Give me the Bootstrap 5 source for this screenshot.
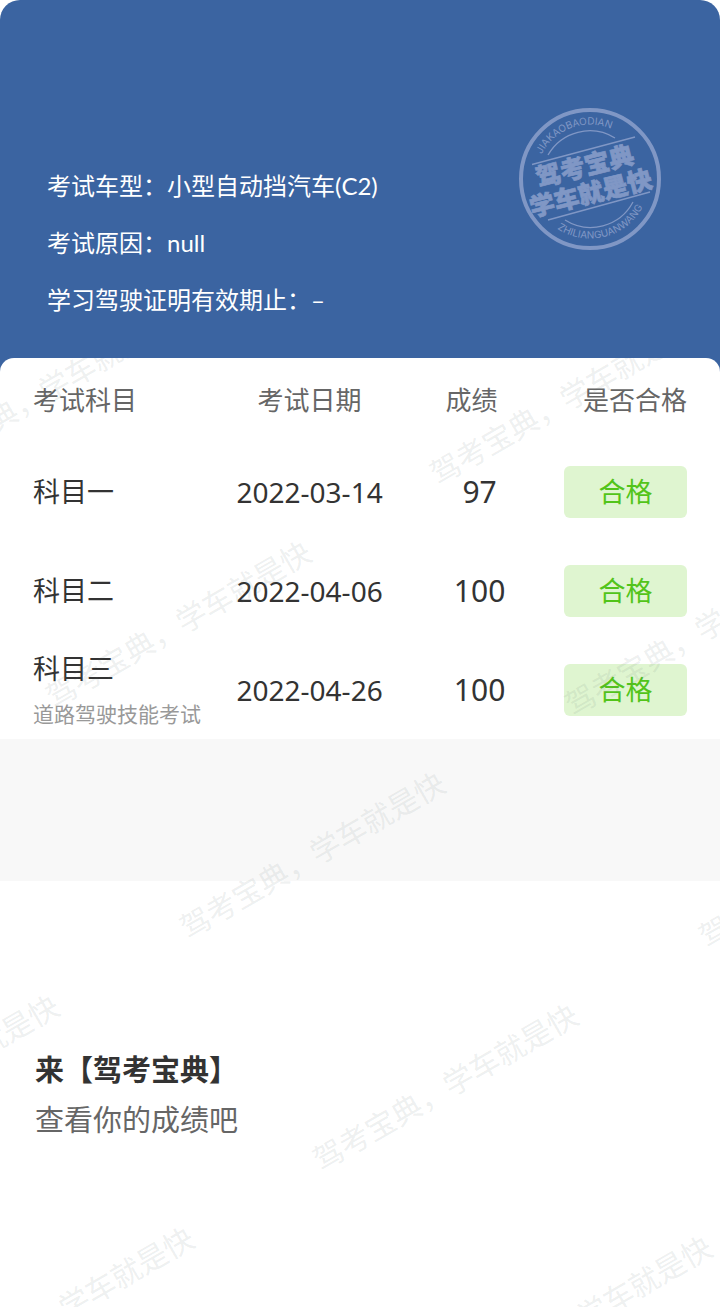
<!DOCTYPE html>
<html lang="zh-CN">
<head>
<meta charset="utf-8">
<meta name="viewport" content="width=device-width, initial-scale=1">
<title>考试成绩</title>
<link rel="stylesheet" href="https://cdn.jsdelivr.net/npm/bootstrap@5.3.0/dist/css/bootstrap.min.css">
<style>
  body { font-family: "Noto Sans", "Noto Sans CJK SC", sans-serif; color: #333; background: #fff; }
  .sheet { background: #3b64a1; border-radius: 20px 20px 0 0; }
  .hero { height: 358px; padding: 108px 59px 0 47px; color: #fff; }
  .facts { margin-top: 49px; font-family: Lato, "Noto Sans CJK SC", sans-serif; font-size: 24px; line-height: 57px; }
  .seal { width: 142px; height: 142px; fill: #8097c5; stroke: none; }
  .seal .ring { fill: none; stroke: #8097c5; }
  .seal-name { font-family: "Noto Sans CJK SC", sans-serif; font-size: 25px; font-weight: 900; stroke: #8097c5; stroke-width: .7; }
  .seal-arc { font-family: Inter, sans-serif; font-size: 10px; text-anchor: middle; }
  .result { background: #fff; border-radius: 14px 14px 0 0; min-height: calc(100vh - 358px); }
  .scores { table-layout: fixed; font-size: 27px; line-height: 36px; }
  .scores th { height: 84px; padding-top: 2px; font-size: 26px; font-weight: 400; color: #666; }
  .scores td { height: 99px; }
  .scores th, .scores td { padding: 0; vertical-align: middle; white-space: nowrap; }
  .scores th:first-child, .scores td:first-child { padding-left: 33px; }
  .scores th:last-child, .scores td:last-child { padding-right: 33px; }
  .c-subject { width: 31%; }
  .c-date { width: 24%; }
  .c-score { width: 21%; }
  .c-pass { width: 24%; }
  .day { font-size: 28px; }
  .scores td.points { font-size: 30px; padding-left: 16px; }
  .kind { font-size: 21px; line-height: 30px; margin-top: 12px; color: #999; }
  .passed { width: 123px; height: 52px; line-height: 52px; border-radius: 6px; background: #dff5d0; color: #52c41a; }
  .band { height: 142px; background: #f8f8f8; }
  .invite { padding: 164px 35px 0; font-size: 29px; line-height: 50px; }
  .invite p { color: #666; }
  .watermark { inset: 0; pointer-events: none; font-size: 30px; fill: #5a6e6e; fill-opacity: .11; }
</style>
</head>
<body>
<div class="sheet">
  <header class="hero d-flex justify-content-between align-items-start">
    <div class="facts">
      <div>考试车型：小型自动挡汽车(C2)</div>
      <div>考试原因：null</div>
      <div>学习驾驶证明有效期止：–</div>
    </div>
    <svg class="seal flex-shrink-0" viewBox="9 8 142 142" role="img" aria-label="驾考宝典 学车就是快">
      <defs>
        <path id="arcTop" d="M27 89 A54 54 0 0 1 127 52"/>
        <path id="arcBottom" d="M29 110 A60 60 0 0 0 140 82"/>
      </defs>
      <circle class="ring" cx="80" cy="79" r="69" stroke-width="4"/>
      <path class="ring" stroke-width="1.3" d="M38 55 A48 48 0 0 1 105 38 M55 120 A48 48 0 0 0 123 102 M22 64.500 L125 37 M38 120 L140 92"/>
      <text class="seal-arc"><textPath href="#arcTop" startOffset="50%">JIAKAOBAODIAN</textPath></text>
      <text class="seal-arc"><textPath href="#arcBottom" startOffset="50%">ZHILIANGUANWANG</textPath></text>
      <g class="seal-name" text-anchor="middle">
        <text transform="translate(77 75) rotate(-14)">驾考宝典</text>
        <text transform="translate(83 102) rotate(-14)">学车就是快</text>
      </g>
    </svg>
  </header>

  <main class="result position-relative overflow-hidden">
    <table class="scores w-100 text-center">
      <colgroup><col class="c-subject"><col class="c-date"><col class="c-score"><col class="c-pass"></colgroup>
      <thead>
        <tr><th class="text-start">考试科目</th><th>考试日期</th><th>成绩</th><th class="text-end">是否合格</th></tr>
      </thead>
      <tbody>
        <tr><td class="text-start">科目一</td><td class="day">2022-03-14</td><td class="points">97</td><td><div class="passed ms-auto">合格</div></td></tr>
        <tr><td class="text-start">科目二</td><td class="day">2022-04-06</td><td class="points">100</td><td><div class="passed ms-auto">合格</div></td></tr>
        <tr><td class="text-start">科目三<div class="kind">道路驾驶技能考试</div></td><td class="day">2022-04-26</td><td class="points">100</td><td><div class="passed ms-auto">合格</div></td></tr>
      </tbody>
    </table>
    <div class="band"></div>
    <section class="invite">
      <div class="fw-bold">来【驾考宝典】</div>
      <p class="mb-0">查看你的成绩吧</p>
    </section>

    <!-- slanted brand text repeated over the whole result -->
    <svg class="watermark position-absolute w-100 h-100" aria-hidden="true">
      <text transform="translate(-83 120) rotate(-30)">驾考宝典，学车就是快</text>
      <text transform="translate(438 128) rotate(-30)">驾考宝典，学车就是快</text>
      <text transform="translate(54 351) rotate(-30)">驾考宝典，学车就是快</text>
      <text transform="translate(573 359) rotate(-30)">驾考宝典，学车就是快</text>
      <text transform="translate(188 582) rotate(-30)">驾考宝典，学车就是快</text>
      <text transform="translate(707 591) rotate(-30)">驾考宝典，学车就是快</text>
      <text transform="translate(-198 805) rotate(-30)">驾考宝典，学车就是快</text>
      <text transform="translate(321 814) rotate(-30)">驾考宝典，学车就是快</text>
      <text transform="translate(-63 1037) rotate(-30)">驾考宝典，学车就是快</text>
      <text transform="translate(455 1046) rotate(-30)">驾考宝典，学车就是快</text>
    </svg>
  </main>
</div>
<script src="https://cdn.jsdelivr.net/npm/bootstrap@5.3.0/dist/js/bootstrap.bundle.min.js"></script>
</body>
</html>
